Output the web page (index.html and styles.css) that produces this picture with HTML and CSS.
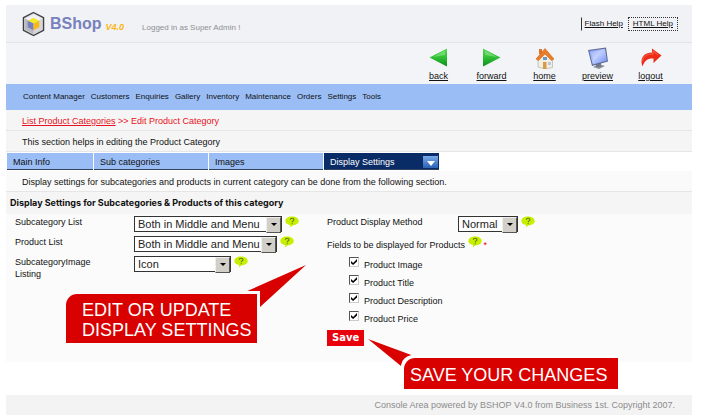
FILE: index.html
```html
<!DOCTYPE html>
<html lang="en">
<head>
<meta charset="utf-8">
<title>BShop V4.0 - Edit Product Category</title>
<link rel="stylesheet" href="styles.css">
</head>
<body>
<svg class="defs" width="0" height="0" aria-hidden="true">
  <defs>
    <linearGradient id="green" x1="0" y1="0" x2="0" y2="1"><stop offset="0" stop-color="#5fd65a"/><stop offset=".5" stop-color="#2fbf35"/><stop offset="1" stop-color="#0d8f1d"/></linearGradient>
    <linearGradient id="screen" x1="0" y1="0" x2="1" y2="1"><stop offset="0" stop-color="#6f8cf0"/><stop offset=".5" stop-color="#b9c9ff"/><stop offset="1" stop-color="#6a86ee"/></linearGradient>
    <linearGradient id="tabblue" x1="0" y1="0" x2="0" y2="1"><stop offset="0" stop-color="#79a9e8"/><stop offset="1" stop-color="#2b62b4"/></linearGradient>
    <symbol id="help" viewBox="0 0 14 12"><path d="M7 0.5C11 .5 13.7 2.400 13.700 5C13.700 7.600 11 9.200 7.600 9.300L4.800 11.500L5.200 9.100C2.300 8.700.400 7.200.400 5C.400 2.400 3 .5 7 .5Z" fill="#c8ee00"/><path d="M5.300 3.700C5.300 1.800 9 1.800 9 3.700C9 4.900 7.200 4.800 7.200 6.200M7.200 7.200V8.200" fill="none" stroke="#5f7d12" stroke-width="1.100"/></symbol>
  </defs>
</svg>
<div class="page">
  <header class="brand">
    <svg class="logo" viewBox="0 0 24 26" aria-hidden="true">
      <path d="M12 1L22.500 6.500V19.500L12 25L1.500 19.500V6.500Z" fill="#d6d6da" stroke="#3c3c42" stroke-width="1.400"/>
      <path d="M12 2.500L3 7.200V18.800L12 23.500Z" fill="#b9b9c0"/>
      <path d="M3 7.200L12 2.500L21 7.200L12 12Z" fill="#f1f1f3"/>
      <path d="M6 9.500L12 6.500L18 9.500L12 12.500Z" fill="#f2ea28"/>
      <path d="M6 9.500L12 12.500V19.500L6 16.500Z" fill="#7580c4"/>
      <path d="M18 9.500L12 12.500V19.500L18 16.500Z" fill="#fbb917"/>
    </svg>
    <span class="name">BShop</span>
    <span class="version">V4.0</span>
    <span class="user">Logged in as Super Admin !</span>
    <nav class="helplinks"><a class="flash" href="#">Flash Help</a><a class="html" href="#">HTML Help</a></nav>
  </header>

  <nav class="toolbar">
    <a href="#"><svg viewBox="0 0 22 22"><path d="M1.500 10.500L19 1.500V19.500Z" fill="url(#green)"/><path d="M5 10L17 3.500V8Z" fill="#8be686" opacity=".6"/></svg>back</a>
    <a href="#"><svg viewBox="0 0 22 22"><path d="M19.500 10.500L2 1.500V19.500Z" fill="url(#green)"/><path d="M16 10L4 3.500V8Z" fill="#8be686" opacity=".6"/></svg>forward</a>
    <a href="#"><svg viewBox="0 0 22 22"><path d="M4 11L11 5L18.500 11V20.500L11 22L4 20Z" fill="#f2eee0" stroke="#a7a7a0" stroke-width=".6"/><path d="M5 2H8V7H5Z" fill="#d9762c"/><path d="M2 12L11 1.500L20 12L17.500 13.500L11 7L4.500 13.500Z" fill="#ee7c22" stroke="#c65d14" stroke-width=".5"/><path d="M9 15H12.500V22H9Z" fill="#d69a4a"/><path d="M9 10H13V13H9Z" fill="#6c97c8"/><path d="M14 15H17V18H14Z" fill="#b9c8d6"/></svg>home</a>
    <a href="#"><svg viewBox="0 0 22 22"><path d="M6 20L12 17L18 19L12 22Z" fill="#8c919b"/><path d="M9 16H14V20H9Z" fill="#737985"/><path d="M1 3L19 .500L21 14.500L5 19Z" fill="#5e6a90"/><path d="M2 3.700L18 1.700L20 13.800L5.800 17.500Z" fill="url(#screen)"/><path d="M3 5L16 3L7 13Z" fill="#fff" opacity=".25"/></svg>preview</a>
    <a href="#"><svg viewBox="0 0 22 22"><path d="M12 1.500L21.500 8.500L13.500 16V11.500C8 11 4.500 13.500 2.500 19.500C-.500 12 3.500 5.500 12 5.500Z" fill="#ec2c18"/><path d="M2.500 14C3.500 9 7 7 13 7V4L18 8" fill="none" stroke="#ff7b62" stroke-width="1" opacity=".7"/></svg>logout</a>
  </nav>

  <nav class="menu">
    <a href="#">Content Manager</a><a href="#">Customers</a><a href="#">Enquiries</a><a href="#">Gallery</a><a href="#">Inventory</a><a href="#">Maintenance</a><a href="#">Orders</a><a href="#">Settings</a><a href="#">Tools</a>
  </nav>

  <div class="strip crumbs"><a href="#">List Product Categories</a> &gt;&gt; Edit Product Category</div>
  <div class="strip">This section helps in editing the Product Category</div>

  <nav class="tabs">
    <a class="short" href="#">Main Info</a><a href="#">Sub categories</a><a href="#">Images</a><a class="active" href="#">Display Settings<svg viewBox="0 0 15 12" aria-hidden="true"><rect width="15" height="12" fill="url(#tabblue)"/><path d="M4 5H12L8 10Z" fill="#fff"/></svg></a>
  </nav>

  <div class="strip note">Display settings for subcategories and products in current category can be done from the following section.</div>
  <h1>Display Settings for Subcategories &amp; Products of this category</h1>

  <main>
    <form>
      <div class="column">
        <div class="row">
          <label for="sub">Subcategory List</label>
          <span class="pick wide"><select id="sub"><option>Both in Middle and Menu</option></select></span>
          <svg class="help"><use href="#help"/></svg>
        </div>
        <div class="row">
          <label for="prod">Product List</label>
          <span class="pick medium"><select id="prod"><option>Both in Middle and Menu</option></select></span>
          <svg class="help"><use href="#help"/></svg>
        </div>
        <div class="row">
          <label for="img">SubcategoryImage<br>Listing</label>
          <span class="pick small"><select id="img"><option>Icon</option></select></span>
          <svg class="help"><use href="#help"/></svg>
        </div>
      </div>
      <div class="column">
        <div class="row method">
          <label for="method">Product Display Method</label>
          <span class="pick tiny"><select id="method"><option>Normal</option></select></span>
          <svg class="help"><use href="#help"/></svg>
        </div>
        <fieldset>
          <legend>Fields to be displayed for Products <svg class="help"><use href="#help"/></svg><span class="required">*</span></legend>
          <label><input type="checkbox" checked><span>Product Image</span></label>
          <label><input type="checkbox" checked><span>Product Title</span></label>
          <label><input type="checkbox" checked><span>Product Description</span></label>
          <label><input type="checkbox" checked><span>Product Price</span></label>
        </fieldset>
        <button type="button">Save</button>
      </div>
    </form>
    <div class="callout edit">
      <svg viewBox="0 0 62 42" aria-hidden="true"><path d="M0 27L61 0L15 42V27Z" fill="#d90000"/></svg>
      <p>EDIT OR UPDATE<br>DISPLAY SETTINGS</p>
    </div>
    <div class="callout save">
      <svg viewBox="0 0 48 28" aria-hidden="true"><path d="M0 0L46 17L33 27Z" fill="#d90000"/></svg>
      <p>SAVE YOUR CHANGES</p>
    </div>
  </main>
  <footer>Console Area powered by BSHOP V4.0 from Business 1st. Copyright 2007.</footer>
</div>
</body>
</html>
```

FILE: styles.css
```css
* { box-sizing: border-box; }

body {
  margin: 0;
  background: #fff;
  color: #111;
  font: 9px/12px "Liberation Sans", Arial, sans-serif;
}

a { color: inherit; }
.defs { position: absolute; }
.page { margin: 5px 10px 5px 6px; }

.brand {
  display: flex;
  align-items: center;
  height: 38px;
  padding: 0 14px 0 16px;
  background: #f1f2f6;
  border-bottom: 1px solid #e2e3e6;
}
.logo { width: 23px; height: 26px; }
.name { margin-left: 5px; color: #7781bd; font-size: 16px; line-height: 20px; font-weight: bold; }
.version { margin: 6px 0 0 4px; color: #fcb514; font-size: 9px; font-weight: bold; font-style: italic; }
.user { margin: 8px 0 0 18px; color: #8e8e92; font-size: 8px; }
.helplinks { display: flex; margin: 0 0 0 auto; gap: 4px; font-size: 8px; }
.helplinks a { padding: 0 4px; border: 1px solid transparent; }
.helplinks .flash { padding: 0 0 0 3px; border-left-color: #333; }
.helplinks .html { border: 1px dotted #333; }

.toolbar {
  display: flex;
  justify-content: flex-end;
  height: 41px;
  padding: 4px 15px 0 0;
  background: #f3f4f8;
}
.toolbar a {
  display: flex;
  flex-direction: column;
  align-items: center;
  width: 53px;
}
.toolbar svg { width: 22px; height: 22px; margin-bottom: 1px; }

.menu {
  display: flex;
  align-items: center;
  gap: 6px;
  height: 26px;
  padding-left: 17px;
  background: #9abdf5;
  font-size: 8px;
}
.menu a { text-decoration: none; }

.strip {
  height: 21px;
  padding: 5px 16px 0;
  background: #f5f5f5;
  border-bottom: 1px solid #e6e6e6;
}
.crumbs { color: #e81123; }
.note { background: #fafafa; }

.tabs { display: flex; gap: 1px; padding: 1px 0 1px 1px; }
.tabs a {
  display: flex;
  align-items: center;
  justify-content: space-between;
  width: 114px;
  height: 17px;
  padding: 1px 1px 0 6px;
  background: #9abdf5;
  border-bottom: 1px solid #33445f;
  text-decoration: none;
}
.tabs .short { width: 86px; }
.tabs .active { width: 115px; background: #0a2c66; color: #fff; }
.tabs svg { width: 15px; height: 12px; }

h1 {
  margin: 0;
  padding: 5px 4px;
  background: #f5f5f5;
  font: bold 9px/12px Inter, "Liberation Sans", sans-serif;
}

main { position: relative; height: 148px; background: #fbfbfb; }
form { display: grid; grid-template-columns: 312px 1fr; padding: 2px 0 0 9px; }
.row { display: flex; align-items: flex-start; height: 20px; }
.row label { width: 119px; }
.method label { width: 131px; }

.pick { position: relative; height: 16px; }
.wide { width: 148px; }
.medium { width: 143px; }
.small { width: 97px; }
.tiny { width: 60px; }
.pick select {
  appearance: none;
  display: block;
  width: 100%;
  height: 16px;
  margin: 0;
  padding: 0 3px;
  background: #fff;
  border: 1px solid #333;
  border-radius: 0;
  color: #222;
  font: 11px/14px "Liberation Sans", Arial, sans-serif;
}
.pick::before {
  content: "";
  position: absolute;
  right: 1px;
  top: 1px;
  width: 13px;
  height: 14px;
  background: #d2cfc9;
  border: 1px solid;
  border-color: #eee #555 #555 #eee;
  pointer-events: none;
}
.pick::after {
  content: "";
  position: absolute;
  right: 5px;
  top: 7px;
  border: 3px solid transparent;
  border-top-color: #000;
  border-bottom: 0;
  pointer-events: none;
}
.help { width: 14px; height: 12px; margin-left: 3px; }

fieldset { margin: 0; padding: 0; border: 0; }
legend { padding: 0; height: 19px; line-height: 12px; }
legend .help { margin-left: 0; }
.required { margin-left: 2px; color: #e00012; }
fieldset label { display: flex; gap: 5px; height: 18px; padding-left: 22px; }
fieldset label span { padding-top: 4px; }
input {
  appearance: none;
  position: relative;
  width: 10px;
  height: 10px;
  margin: 2px 0 0;
  background: #fff;
  border: 1px solid;
  border-color: #555 #ccc #ccc #555;
}
input:checked::after {
  content: "";
  position: absolute;
  inset: 1px;
  background: #000;
  clip-path: polygon(0 35%, 35% 65%, 100% 0, 100% 40%, 35% 100%, 0 70%);
}
button {
  display: block;
  height: 16px;
  margin: 3px 0 0;
  padding: 0 5px;
  background: #e8000b;
  border: 0;
  color: #fff;
  font: bold 10px/16px "DejaVu Sans", sans-serif;
}

.callout { position: absolute; color: #fff; font-size: 18px; line-height: 20px; }
.callout p { position: relative; margin: 0; background: #d90000; border-top-left-radius: 11px; }
.callout svg { position: absolute; }
.edit { left: 60px; top: 80px; }
.edit p { padding: 6px 6px 3px 16px; box-shadow: 0 0 0 3px #fbfbfb; }
.edit svg { left: 179px; top: -29px; width: 62px; height: 42px; }
.save { left: 398px; top: 144px; }
.save p { padding: 7px 11px 4px 6px; box-shadow: -2px -2px 0 1px #fff; }
.save svg { left: -36px; top: -19px; width: 48px; height: 28px; }

footer {
  margin-top: 33px;
  padding: 4px 17px;
  background: #f3f3f3;
  color: #8c8c8c;
  text-align: right;
}
```
